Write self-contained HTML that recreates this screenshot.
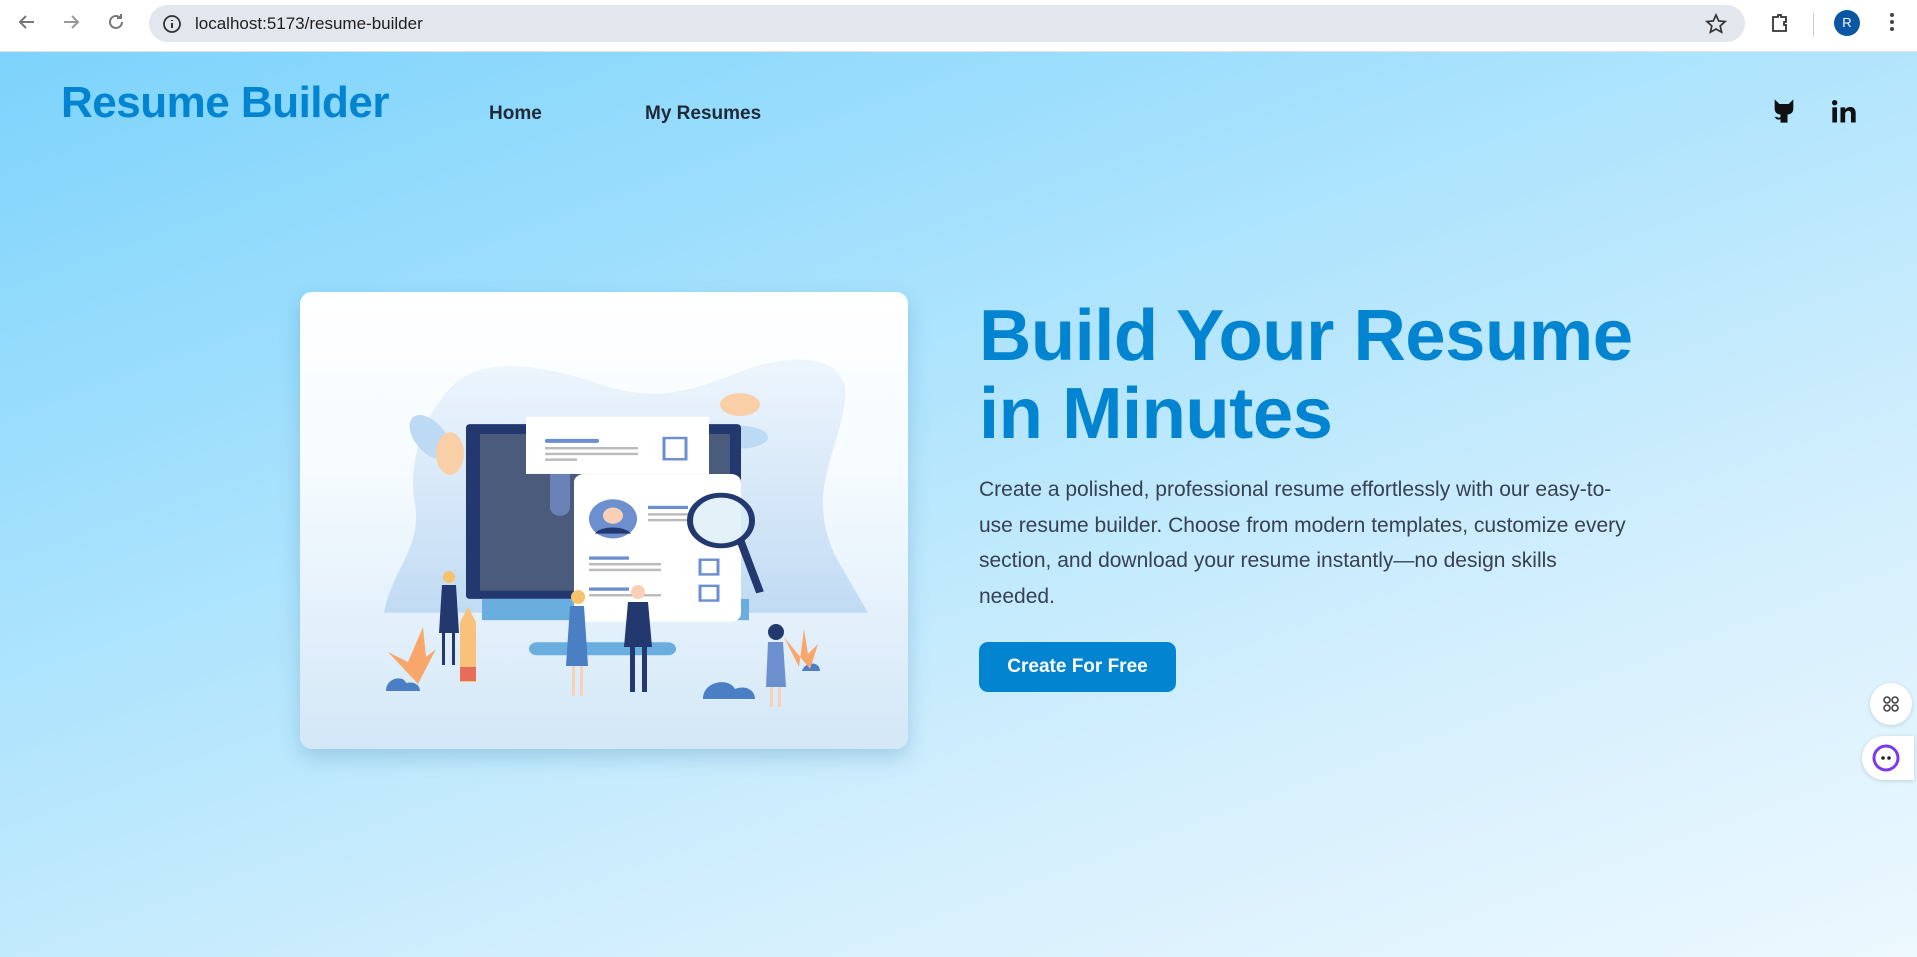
<!DOCTYPE html>
<html><head><meta charset="utf-8"><style>
*{margin:0;padding:0;box-sizing:border-box}
body{width:1917px;height:957px;overflow:hidden;font-family:"Liberation Sans",sans-serif;position:relative;background:#fff}
.chrome{position:absolute;left:0;top:0;width:1917px;height:52px;background:#fff;border-bottom:1px solid #e3e3e3}
.addr{position:absolute;left:149px;top:5px;width:1596px;height:37px;border-radius:19px;background:#e2e6ed}
.addr span{position:absolute;left:46px;top:9px;font-size:17px;color:#1f1f1f}
.main{position:absolute;left:0;top:52px;width:1917px;height:905px;background:linear-gradient(160deg,#7dd3fc 0%,#a8e2fd 35%,#d3effd 70%,#ecf8fe 100%)}
.logo{position:absolute;left:61px;top:26px;font-size:44px;font-weight:bold;color:#0284d0;letter-spacing:-0.5px}
.nav{position:absolute;top:51px;font-size:19px;font-weight:bold;color:#1f2937}
.card{position:absolute;left:300px;top:240px;width:608px;height:457px;border-radius:12px;background:linear-gradient(180deg,#fff 0%,#f5fbff 40%,#e4f1fb 70%,#d3e7f7 100%);box-shadow:0 8px 20px rgba(40,110,160,.25);overflow:hidden}
h1{position:absolute;left:979px;top:245px;font-size:72.5px;line-height:78px;font-weight:bold;color:#0284d0;letter-spacing:-0.5px;width:720px}
p{position:absolute;left:979px;top:420px;white-space:nowrap;font-size:21px;line-height:35.5px;color:#374151}
.btn{position:absolute;left:979px;top:590px;width:197px;height:50px;border-radius:9px;background:#0284d0;color:#fff;font-size:19px;font-weight:bold;text-align:center;line-height:50px}
.fab{position:absolute;background:#fff;border-radius:50%;box-shadow:0 1px 4px rgba(0,0,0,.15)}
</style></head><body>
<div class="chrome">
<svg width="140" height="52" style="position:absolute;left:0;top:0"><g fill="none" stroke="#777" stroke-width="2"><path d="M34 22h-14M26 16l-6 6 6 6"/><path d="M64 22h14M72 16l6 6-6 6" stroke="#999"/><path d="M122 22a6 6 0 1 1-2-4.5M121 14v4h-4"/></g></svg>
<div class="addr"><svg width="22" height="22" style="position:absolute;left:12px;top:8px"><circle cx="11" cy="11" r="8" fill="none" stroke="#333" stroke-width="1.8"/><path d="M11 10v5M11 7v1" stroke="#333" stroke-width="2"/></svg><span>localhost:5173/resume-builder</span>
<svg width="22" height="22" style="position:absolute;right:18px;top:8px"><path d="M11 2l2.7 6 6.3.6-4.8 4.3 1.4 6.3L11 16l-5.6 3.2 1.4-6.3L2 8.6l6.3-.6z" fill="none" stroke="#333" stroke-width="1.7"/></svg></div>
<svg width="24" height="24" style="position:absolute;left:1768px;top:11px"><path d="M5 6h5V4h3v2h5v5h-2v3h2v6H5z" fill="none" stroke="#333" stroke-width="1.8"/></svg>
<div style="position:absolute;left:1813px;top:13px;width:1px;height:24px;background:#ccc"></div>
<div style="position:absolute;left:1834px;top:10px;width:26px;height:26px;border-radius:50%;background:#0b57a4;color:#fff;font-size:13px;text-align:center;line-height:26px">R</div>
<div style="position:absolute;left:1890px;top:13px;width:4px;font-size:0">
<div style="width:4px;height:4px;border-radius:2px;background:#444;margin-bottom:3px"></div><div style="width:4px;height:4px;border-radius:2px;background:#444;margin-bottom:3px"></div><div style="width:4px;height:4px;border-radius:2px;background:#444"></div></div>
</div>
<div class="main">
<div class="logo">Resume Builder</div>
<div class="nav" style="left:489px">Home</div>
<div class="nav" style="left:645px">My Resumes</div>
<svg width="28" height="28" viewBox="0 0 24 24" style="position:absolute;left:1770px;top:45px"><path d="M4 2l4 4h8l4-4v8c0 3-2 5-5 5v7H9v-3c-2 1-4 0-5-2h2c1 1 2 1 3 0v-2c-3 0-5-2-5-5z" fill="#111"/></svg>
<svg width="28" height="28" viewBox="0 0 24 24" style="position:absolute;left:1830px;top:46px"><circle cx="4" cy="4" r="2.3" fill="#111"/><rect x="2" y="8" width="4" height="13" fill="#111"/><path d="M9 8h4v2c1-1.5 2.5-2.3 4.5-2.3 3 0 4.5 2 4.5 5V21h-4v-7.5c0-1.5-.7-2.5-2.2-2.5S13 12 13 13.6V21H9z" fill="#111"/></svg>

<div class="card">
<svg width="608" height="457" viewBox="0 0 608 457">
<defs><linearGradient id="bl" x1="0" y1="0" x2="0" y2="1"><stop offset="0" stop-color="#eaf3fc"/><stop offset="1" stop-color="#b7d5f1"/></linearGradient></defs>
<g transform="translate(0,-1.8) scale(1,0.8167)">
<path d="M150 120c30-40 90-30 150-5s100 5 150-20c70-25 100 0 95 40-5 60-40 110-10 190l33 70H84c10-60 40-80 30-140-5-50 10-100 36-135z" fill="url(#bl)" opacity=".8"/>
<ellipse cx="130" cy="180" rx="16" ry="30" fill="#bcdaf3" transform="rotate(-30 130 180)"/>
<ellipse cx="440" cy="180" rx="28" ry="14" fill="#bcdaf3"/>
<ellipse cx="150" cy="200" rx="14" ry="26" fill="#f9cfa7"/>
<ellipse cx="440" cy="140" rx="20" ry="14" fill="#f9cfa7"/>
<rect x="166" y="164" width="275" height="214" rx="4" fill="#22386e"/>
<rect x="180" y="176" width="250" height="192" fill="#4a5b7c"/>
<rect x="182" y="378" width="267" height="26" fill="#6aaee0"/>
<rect x="226" y="155" width="183" height="70" fill="#fff"/>
<rect x="245" y="182" width="54" height="5" rx="2" fill="#6b8fcf"/>
<rect x="245" y="192" width="93" height="3" fill="#bbb"/><rect x="245" y="199" width="93" height="3" fill="#bbb"/><rect x="245" y="206" width="32" height="3" fill="#bbb"/>
<rect x="364" y="181" width="22" height="26" fill="none" stroke="#6b8fcf" stroke-width="3"/>
<path d="M250 225v40c0 15 20 15 20 0v-40z" fill="#6a82b5"/>
<rect x="274" y="225" width="167" height="181" rx="10" fill="#fff"/>
<circle cx="313" cy="280" r="24" fill="#6b8fcf"/>
<circle cx="313" cy="276" r="10" fill="#f9d0b5"/><path d="M295 298c5-10 30-10 36 0z" fill="#22386e"/>
<rect x="348" y="264" width="40" height="4" fill="#6b8fcf"/><rect x="348" y="273" width="40" height="3" fill="#bbb"/><rect x="348" y="280" width="40" height="3" fill="#bbb"/>
<rect x="289" y="326" width="40" height="4" fill="#6b8fcf"/><rect x="289" y="334" width="72" height="3" fill="#bbb"/><rect x="289" y="341" width="72" height="3" fill="#bbb"/>
<rect x="289" y="364" width="40" height="4" fill="#6b8fcf"/><rect x="289" y="372" width="72" height="3" fill="#bbb"/>
<rect x="400" y="330" width="18" height="18" fill="none" stroke="#6b8fcf" stroke-width="3"/>
<rect x="400" y="362" width="18" height="18" fill="none" stroke="#6b8fcf" stroke-width="3"/>
<line x1="440" y1="305" x2="460" y2="370" stroke="#22386e" stroke-width="8"/>
<circle cx="421" cy="282" r="31" fill="#d6ecf5" fill-opacity=".7" stroke="#22386e" stroke-width="6"/>
<rect x="229" y="431" width="147" height="16" rx="8" fill="#6aaee0"/>
</g>
<path d="M403 407c0-18 26-22 32-10 9-4 20 0 20 10z" fill="#4a7fc4"/>
<path d="M86 399c0-14 18-16 20-8 8-2 14 2 14 8z" fill="#4a7fc4"/>
<path d="M502 379c3-10 18-10 18 0z" fill="#4a7fc4"/>
<path d="M88 360l20 10 15-35 3 30 10-8-18 35z" fill="#f9a66b"/><path d="M484 345l15 30 5-38 4 25 10-10-8 25z" fill="#f9a66b"/>
<g fill="#22386e"><circle cx="149" cy="285" r="6" fill="#f4c36b"/><path d="M142 293h14l3 48h-20z"/><rect x="142" y="341" width="3" height="32"/><rect x="152" y="341" width="3" height="32"/></g>
<path d="M160 330l8-15 8 15v60h-16z" fill="#f9c27a"/><rect x="160" y="375" width="16" height="14" fill="#e86c5a"/>
<g><circle cx="278" cy="305" r="7" fill="#f4c36b"/><path d="M270 314h14l4 60h-22z" fill="#4a7fc4"/><rect x="272" y="374" width="3" height="30" fill="#f9d0b5"/><rect x="280" y="374" width="3" height="30" fill="#f9d0b5"/></g>
<g fill="#22386e"><circle cx="338" cy="300" r="7" fill="#f9d0b5"/><path d="M328 310h20l4 45h-28z"/><rect x="330" y="355" width="5" height="45"/><rect x="342" y="355" width="5" height="45"/></g>
<g><circle cx="476" cy="340" r="8" fill="#22386e"/><path d="M468 350h15l3 45h-20z" fill="#6b8fcf"/><rect x="470" y="395" width="3" height="20" fill="#f9d0b5"/><rect x="478" y="395" width="3" height="20" fill="#f9d0b5"/></g>
</svg>
</div>

<h1>Build Your Resume<br>in Minutes</h1>
<p>Create a polished, professional resume effortlessly with our easy-to-<br>use resume builder. Choose from modern templates, customize every<br>section, and download your resume instantly—no design skills<br>needed.</p>
<div class="btn">Create For Free</div>

<div class="fab" style="left:1870px;top:631px;width:42px;height:42px"><svg width="42" height="42"><g fill="none" stroke="#444" stroke-width="1.6"><circle cx="17" cy="17" r="3"/><circle cx="25" cy="17" r="3"/><circle cx="17" cy="25" r="3"/><circle cx="25" cy="25" r="3"/></g></svg></div>
<div class="fab" style="left:1862px;top:684px;width:52px;height:44px;border-radius:22px 0 0 22px"><svg width="44" height="44"><circle cx="24" cy="22" r="12" fill="none" stroke="#7c3aed" stroke-width="3"/><circle cx="21" cy="22" r="1.8" fill="#222"/><circle cx="27" cy="22" r="1.8" fill="#222"/></svg></div>
</div>
</body></html>
